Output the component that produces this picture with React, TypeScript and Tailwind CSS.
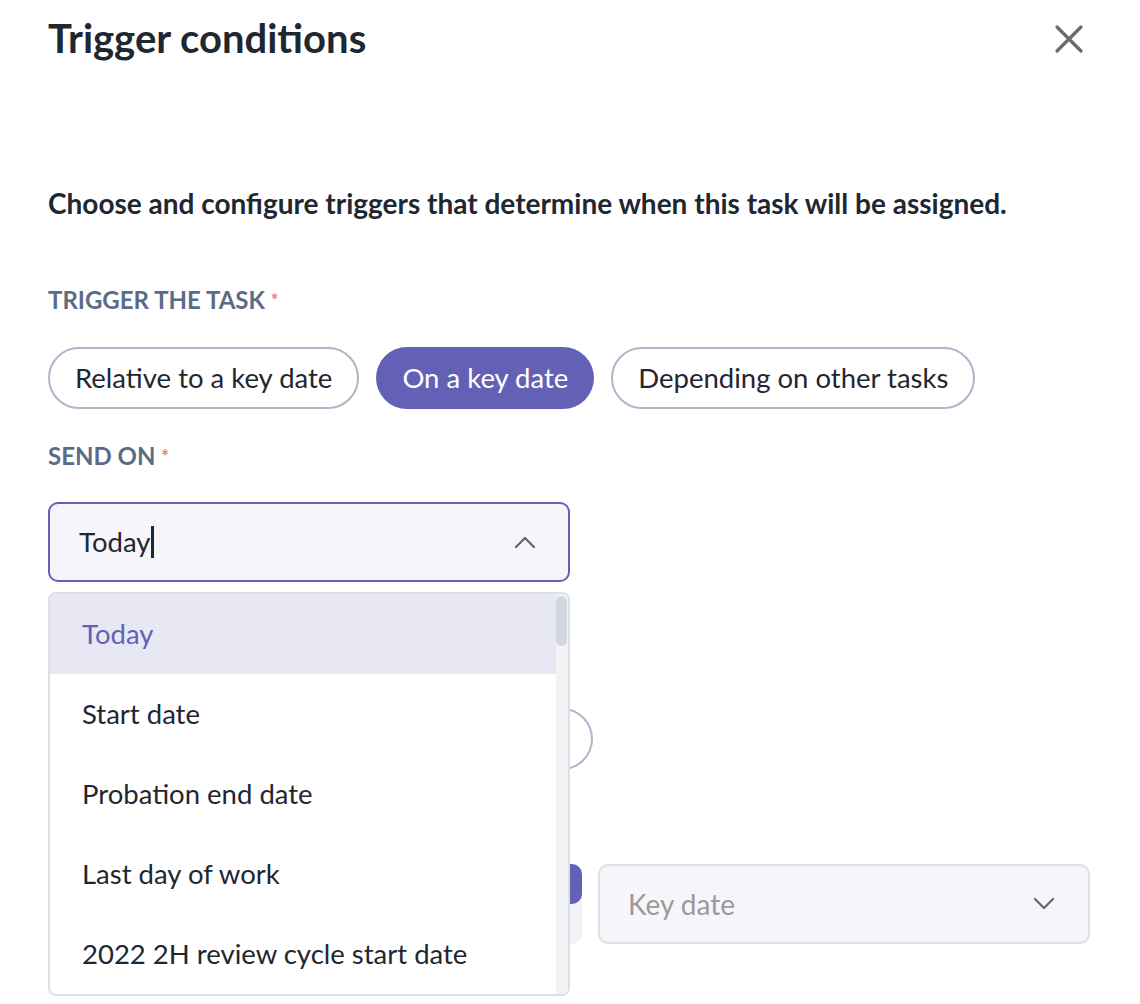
import React from "react";

const font = { fontFamily: "Lato, 'Noto Sans', sans-serif" };

function Chevron({ up }: { up?: boolean }) {
  return (
    <svg width="22" height="14" viewBox="0 0 22 14" fill="none">
      <path
        d={up ? "M2 12 L11 3 L20 12" : "M2 2 L11 11 L20 2"}
        stroke="#666"
        strokeWidth="2.2"
        strokeLinecap="round"
        strokeLinejoin="round"
      />
    </svg>
  );
}

export default function App() {
  const items = [
    "Today",
    "Start date",
    "Probation end date",
    "Last day of work",
    "2022 2H review cycle start date",
  ];
  return (
    <div className="w-[1140px] h-[1004px] bg-white overflow-hidden text-[#1f2731]" style={font}>
      <div className="pl-[48px] pr-[50px] pt-[14px]">
        <div className="flex items-center justify-between">
          <h1 className="text-[40px] leading-[48px] font-bold text-[#1f2731]">Trigger conditions</h1>
          <svg width="32" height="32" viewBox="0 0 32 32" className="mr-[5px] mt-[1px]">
            <path d="M4 4 L28 28 M28 4 L4 28" stroke="#6b6b6b" strokeWidth="3.2" strokeLinecap="round" />
          </svg>
        </div>
        <p className="mt-[123px] text-[28px] leading-[36px] font-bold text-[#1f2731]">
          Choose and configure triggers that determine when this task will be assigned.
        </p>
        <div className="mt-[64px] text-[24px] leading-[30px] font-bold text-[#5b6c86]">
          TRIGGER THE TASK <span className="text-[#f07b7b] text-[18px] align-top">*</span>
        </div>
        <div className="mt-[32px] flex gap-[17px]">
          <div className="h-[62px] px-[25px] flex items-center rounded-full border-2 border-[#aab8c7] text-[27.5px] text-[#1f2731]">
            Relative to a key date
          </div>
          <div className="h-[62px] px-[26px] flex items-center rounded-full bg-[#6361b5] text-[27.5px] text-white">
            On a key date
          </div>
          <div className="h-[62px] px-[25px] flex items-center rounded-full border-2 border-[#aab8c7] text-[27.5px] text-[#1f2731]">
            Depending on other tasks
          </div>
        </div>
        <div className="mt-[32px] text-[24px] leading-[30px] font-bold text-[#5b6c86]">
          SEND ON <span className="text-[#f07b7b] text-[18px] align-top">*</span>
        </div>
        <div className="relative mt-[31px] w-[522px]">
          <div className="h-[80px] rounded-[10px] border-2 border-[#6361b5] bg-[#f5f5fa] flex items-center justify-between pl-[29px] pr-[32px]">
            <span className="text-[27.5px] text-[#1f2731] flex items-center">
              Today<span className="inline-block w-[3px] h-[32px] bg-[#1f2731] ml-[1px]" />
            </span>
            <Chevron up />
          </div>

          {/* content hidden beneath the dropdown */}
          <div className="mt-[126px] flex gap-[17px] w-[600px]">
            <div className="h-[62px] w-[545px] shrink-0 rounded-full border-2 border-[#aab8c7]" />
          </div>
          <div className="mt-[94px] flex gap-[16px] w-[1042px]">
            <div className="w-[534px] shrink-0 h-[80px] rounded-[10px] bg-[#f2f2f8] flex flex-col">
              <div className="h-[40px] rounded-[10px] bg-[#6361b5]" />
            </div>
            <div className="flex-1 h-[80px] rounded-[10px] border-2 border-[#dcdfe4] bg-[#f6f6fa] flex items-center justify-between pl-[28px] pr-[33px]">
              <span className="text-[28px] text-[#9a9a9a]">Key date</span>
              <Chevron />
            </div>
          </div>

          <div className="absolute left-0 top-[90px] w-[522px] h-[404px] rounded-[8px] border-2 border-[#dcdfe5] bg-white overflow-hidden flex">
            <div className="flex-1">
              {items.map((t, i) => (
                <div
                  key={t}
                  className={
                    i === 0
                      ? "h-[80px] flex items-center pl-[32px] text-[27.5px] bg-[#e8e8f4] text-[#6361b5]"
                      : "h-[80px] flex items-center pl-[32px] text-[27.5px] text-[#1f2731]"
                  }
                >
                  {t}
                </div>
              ))}
            </div>
            <div className="w-[12px] bg-[#f2f3f5] pt-[2px]">
              <div className="h-[50px] w-[11px] rounded-full bg-[#d3d8de]" />
            </div>
          </div>
        </div>
      </div>
    </div>
  );
}
